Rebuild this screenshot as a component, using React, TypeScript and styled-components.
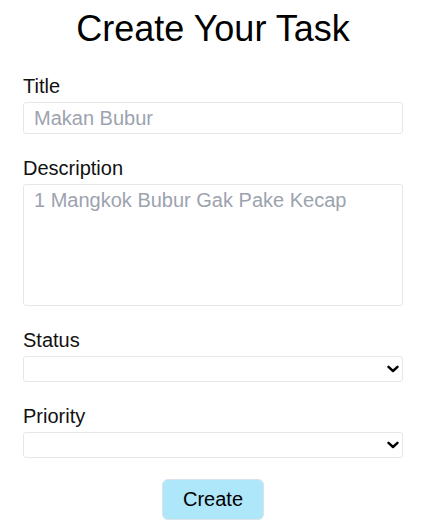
import React from "react";
import styled, { createGlobalStyle } from "styled-components";

const Global = createGlobalStyle`
  html, body {
    margin: 0;
    padding: 0;
    background: #ffffff;
    font-family: "Liberation Sans", Arial, sans-serif;
    color: #000000;
  }
  * { box-sizing: border-box; }
`;

const Page = styled.div`
  padding: 9px 24px 12px 23px;
`;

const Heading = styled.h1`
  margin: 0 0 23px;
  font-size: 36px;
  line-height: 40px;
  font-weight: 400;
  text-align: center;
`;

const Form = styled.form`
  display: flex;
  flex-direction: column;
  gap: 20px;
`;

const Field = styled.div`
  display: flex;
  flex-direction: column;
  gap: 2px;
`;

const Label = styled.label`
  font-size: 20px;
  line-height: 28px;
  color: #111111;
`;

const TextInput = styled.input`
  width: 100%;
  height: 32px;
  margin: 0;
  padding: 1px 10px;
  font: inherit;
  font-size: 20px;
  line-height: 28px;
  border: 1px solid #e5e7eb;
  border-radius: 3px;
  outline: none;
  &::placeholder { color: #9ca3af; }
`;

const TextArea = styled.textarea`
  width: 100%;
  height: 122px;
  margin: 0;
  padding: 1px 10px;
  font: inherit;
  font-size: 20px;
  line-height: 28px;
  border: 1px solid #e5e7eb;
  border-radius: 3px;
  outline: none;
  resize: none;
  display: block;
  &::placeholder { color: #9ca3af; }
`;

const SelectWrap = styled.div`
  position: relative;
  width: 100%;
  height: 26px;
`;

const Select = styled.select`
  appearance: none;
  -webkit-appearance: none;
  display: block;
  width: 100%;
  height: 26px;
  margin: 0;
  padding: 0 24px 0 4px;
  font-family: inherit;
  font-size: 16px;
  background: #ffffff;
  border: 1px solid #e5e7eb;
  border-radius: 3px;
  color: #000;
  outline: none;
`;

const Chevron = styled.svg`
  position: absolute;
  right: 4px;
  top: 50%;
  width: 12px;
  height: 8px;
  margin-top: -4px;
  pointer-events: none;
`;

const Actions = styled.div`
  display: flex;
  justify-content: center;
  padding-top: 1px;
`;

const Button = styled.button`
  font-family: inherit;
  font-size: 20px;
  line-height: 27px;
  padding: 6px 20px;
  background: #aee6fa;
  border: 1px solid #dbe3ea;
  border-radius: 6px;
  color: #000;
  cursor: pointer;
`;

function Dropdown({ id, options }: { id: string; options: string[] }) {
  return (
    <SelectWrap>
      <Select id={id} defaultValue="">
        <option value=""></option>
        {options.map((o) => (
          <option key={o} value={o}>
            {o}
          </option>
        ))}
      </Select>
      <Chevron viewBox="0 0 12 8" aria-hidden="true">
        <path
          d="M1.5 1.8 L6 6 L10.5 1.8"
          fill="none"
          stroke="#000"
          strokeWidth="2.4"
          strokeLinecap="round"
          strokeLinejoin="round"
        />
      </Chevron>
    </SelectWrap>
  );
}

export default function App() {
  return (
    <>
      <Global />
      <Page>
        <Heading>Create Your Task</Heading>
        <Form onSubmit={(e) => e.preventDefault()}>
          <Field>
            <Label htmlFor="title">Title</Label>
            <TextInput id="title" placeholder="Makan Bubur" />
          </Field>
          <Field>
            <Label htmlFor="desc">Description</Label>
            <TextArea id="desc" placeholder="1 Mangkok Bubur Gak Pake Kecap" />
          </Field>
          <Field>
            <Label htmlFor="status">Status</Label>
            <Dropdown id="status" options={["Todo", "In Progress", "Done"]} />
          </Field>
          <Field>
            <Label htmlFor="priority">Priority</Label>
            <Dropdown id="priority" options={["Low", "Medium", "High"]} />
          </Field>
          <Actions>
            <Button type="submit">Create</Button>
          </Actions>
        </Form>
      </Page>
    </>
  );
}
